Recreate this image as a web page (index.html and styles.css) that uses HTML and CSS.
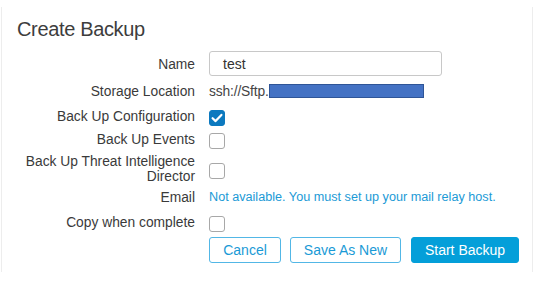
FILE: index.html
```html
<!DOCTYPE html>
<html>
<head>
<meta charset="utf-8">
<link rel="stylesheet" href="styles.css">
</head>
<body>
<div class="panel">
  <h1 class="title">Create Backup</h1>
  <div class="form">
    <div class="label r1">Name</div>
    <div class="value r1"><div class="input">test</div></div>

    <div class="label r2">Storage Location</div>
    <div class="value r2"><span class="plain">ssh://Sftp.</span><span class="redact"></span></div>

    <div class="label r3">Back Up Configuration</div>
    <div class="value r3"><span class="cb checked"><svg viewBox="0 0 16 16" width="16" height="16"><path d="M3.6 8.2 L6.6 11.1 L12.4 4.9" fill="none" stroke="#fff" stroke-width="2.2" stroke-linecap="round" stroke-linejoin="round"/></svg></span></div>

    <div class="label r4">Back Up Events</div>
    <div class="value r4"><span class="cb"></span></div>

    <div class="label r5">Back Up Threat Intelligence<br>Director</div>
    <div class="value r5"><span class="cb"></span></div>

    <div class="label r6">Email</div>
    <div class="value r6"><span class="link">Not available. You must set up your mail relay host.</span></div>

    <div class="label r7">Copy when complete</div>
    <div class="value r7"><span class="cb"></span></div>

    <div class="label r8"></div>
    <div class="value r8 buttons">
      <button class="btn outline">Cancel</button>
      <button class="btn outline save">Save As New</button>
      <button class="btn primary">Start Backup</button>
    </div>
  </div>
</div>
</body>
</html>
```

FILE: styles.css
```css
html, body {
  margin: 0;
  padding: 0;
  background: #fff;
}
body {
  font-family: "Liberation Sans", Arial, sans-serif;
  color: #3a3a3a;
}
.panel {
  margin: 7px 0 0 1px;
  width: 530px;
  height: 265px;
  border-left: 1px solid #ededed;
  border-right: 1px solid #ededed;
  box-sizing: content-box;
  padding: 0;
}
.title {
  margin: 0;
  padding: 10px 0 0 15px;
  font-size: 20px;
  font-weight: normal;
  line-height: 24px;
  color: #3d3d3d;
  letter-spacing: -0.35px;
}
.form {
  margin-top: 10px;
  display: grid;
  grid-template-columns: 193px 1fr;
  column-gap: 14px;
  grid-template-rows: 25px 30px 20px 26px 34px 22px 29px 26px;
  font-size: 13.8px;
}
.label {
  text-align: right;
  align-self: center;
  line-height: 15px;
}
.value {
  display: flex;
  align-items: center;
}
.r1.label { margin-top: 1px; }
.r5.label { margin-top: -1px; }
.input {
  width: 233px;
  height: 25px;
  box-sizing: border-box;
  border: 1px solid #c8c8c8;
  border-radius: 3px;
  padding-left: 13px;
  display: flex;
  align-items: center;
  font-size: 14px;
  color: #333;
}
.plain {
  color: #444;
  letter-spacing: -0.15px;
}
.redact {
  display: inline-block;
  width: 155px;
  height: 14px;
  box-sizing: border-box;
  background: #4472c4;
  border: 1px solid #2f5597;
}
.cb {
  display: inline-block;
  width: 16px;
  height: 16px;
  box-sizing: border-box;
  border: 1px solid #a8a8a8;
  border-radius: 3px;
  background: #fff;
  margin-top: 3px;
}
.cb.checked {
  background: #0c79bf;
  border-color: #0c79bf;
  position: relative;
}
.cb.checked svg {
  position: absolute;
  left: -1px;
  top: -1px;
}
.link {
  color: #1b9ad6;
  font-size: 12.65px;
}
.buttons {
  gap: 0;
}
.btn {
  font-family: "Liberation Sans", Arial, sans-serif;
  font-size: 14px;
  height: 26px;
  box-sizing: border-box;
  border-radius: 3px;
  padding: 0;
  margin: 0;
  white-space: nowrap;
  text-align: center;
  cursor: pointer;
}
.outline {
  background: #fff;
  border: 1px solid #52b7e6;
  color: #1a9ad6;
  width: 72px;
  margin-right: 9px;
}
.outline.save {
  width: 111px;
  margin-right: 10px;
}
.primary {
  background: #049fd9;
  border: 1px solid #049fd9;
  color: #fff;
  width: 108px;
}
```
